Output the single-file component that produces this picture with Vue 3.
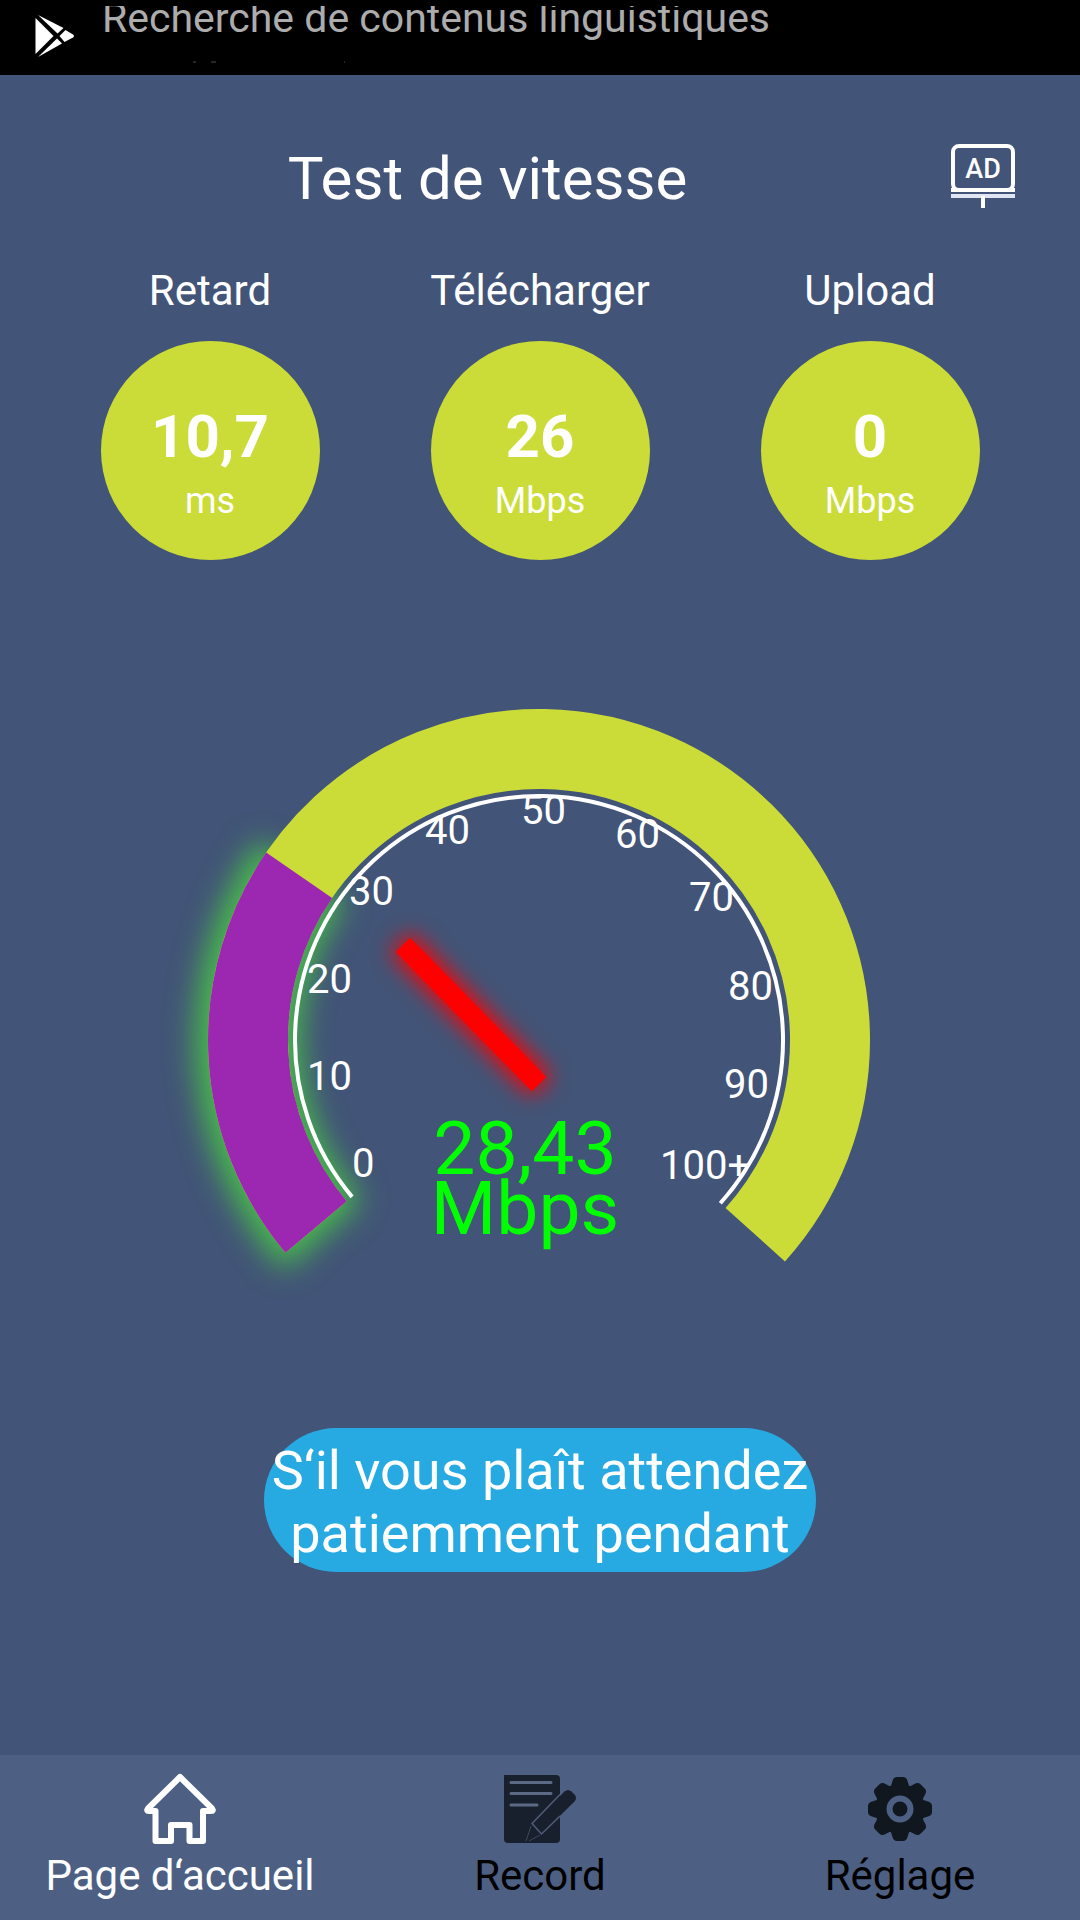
<script setup>
import { ref, computed } from 'vue'

const stats = [
  { label: 'Retard', value: '10,7', unit: 'ms' },
  { label: 'Télécharger', value: '26', unit: 'Mbps' },
  { label: 'Upload', value: '0', unit: 'Mbps' },
]

const tabs = [
  { id: 'home', label: 'Page d‘accueil' },
  { id: 'record', label: 'Record' },
  { id: 'settings', label: 'Réglage' },
]
const active = ref('home')

// Gauge geometry, measured in degrees clockwise from the positive x axis
const START = 140
const SWEEP = 262
const speed = 28.43

function point(radius, degrees) {
  const a = (degrees * Math.PI) / 180
  return `${(radius * Math.cos(a)).toFixed(2)} ${(radius * Math.sin(a)).toFixed(2)}`
}
function arc(radius, from, to) {
  const large = to - from > 180 ? 1 : 0
  return `M${point(radius, from)} A${radius} ${radius} 0 ${large} 1 ${point(radius, to)}`
}

const track = arc(291, START, START + SWEEP)
const rim = arc(244, START, START + SWEEP)
const progressEnd = computed(() => START + (SWEEP * speed) / 100)
const progress = computed(() => arc(291, START, progressEnd.value))
const halo = computed(() => arc(291, START - 2, progressEnd.value + 1))

const ticks = [
  { text: '0', x: -187, y: 137 },
  { text: '10', x: -232, y: 50 },
  { text: '20', x: -232, y: -47 },
  { text: '30', x: -190, y: -135 },
  { text: '40', x: -114, y: -196 },
  { text: '50', x: -18, y: -216 },
  { text: '60', x: 76, y: -192 },
  { text: '70', x: 150, y: -129 },
  { text: '80', x: 189, y: -40 },
  { text: '90', x: 185, y: 58 },
  { text: '100+', x: 121, y: 139 },
]

const teeth = [0, 45, 90, 135, 180, 225, 270, 315]
</script>

<template>
  <div class="screen">
    <div class="status">
      <svg class="play" viewBox="0 0 42 44" aria-hidden="true">
        <path d="M1.5 4V40L19.5 22z" />
        <path d="M4 1L29.500 14L23.500 19.500z" />
        <path d="M4 43L28 29.500L23 24.500z" />
        <path d="M31.500 16L39 20.500Q41 22 39 23.500L30.500 28L25.500 22z" />
      </svg>
      <div class="ticker">
        <span>Recherche de contenus linguistiques</span>
        <svg class="next-line" viewBox="0 0 260 2" aria-hidden="true">
          <path d="M91 1h3M109 1h5M242 1h1" />
        </svg>
      </div>
    </div>

    <header class="header">
      <h1>Test de vitesse</h1>
      <button class="ad" type="button" aria-label="AD">
        <svg viewBox="0 0 64 64" aria-hidden="true">
          <rect x="2" y="2" width="60" height="44" rx="6" fill="none" stroke="#fff" stroke-width="4" />
          <path d="M0 46H64" stroke="#fff" stroke-width="4" />
          <path d="M0 52H64" stroke="#dfe5f2" stroke-width="4" />
          <path d="M32 52V64" stroke="#fff" stroke-width="4" />
          <text x="32" y="34" text-anchor="middle">AD</text>
        </svg>
      </button>
    </header>

    <section class="stats">
      <div v-for="s in stats" :key="s.label" class="stat">
        <h2>{{ s.label }}</h2>
        <div class="disc">
          <strong>{{ s.value }}</strong>
          <span>{{ s.unit }}</span>
        </div>
      </div>
    </section>

    <svg class="gauge" viewBox="-539 -380 1080 640" role="img" aria-label="28,43 Mbps">
      <defs>
        <filter
          id="green-glow"
          filterUnits="userSpaceOnUse"
          color-interpolation-filters="sRGB"
          x="-440"
          y="-300"
          width="400"
          height="600"
        >
          <feGaussianBlur stdDeviation="15" />
        </filter>
        <filter
          id="red-glow"
          filterUnits="userSpaceOnUse"
          color-interpolation-filters="sRGB"
          x="-200"
          y="-160"
          width="260"
          height="260"
        >
          <feGaussianBlur stdDeviation="11" />
        </filter>
      </defs>
      <path class="halo" :d="halo" filter="url(#green-glow)" />
      <path class="band track" :d="track" />
      <path class="band progress" :d="progress" />
      <path class="rim" :d="rim" />
      <text v-for="t in ticks" :key="t.text" class="tick" :x="t.x" :y="t.y">{{ t.text }}</text>
      <path class="needle-halo" d="M-138 -97L2 46" filter="url(#red-glow)" />
      <path class="needle" d="M-136 -95L0 44" />
      <text class="reading" x="-14" y="134">28,43</text>
      <text class="reading" x="-14" y="194">Mbps</text>
    </svg>

    <button class="wait" type="button">S‘il vous plaît attendez<br />patiemment pendant</button>

    <nav class="tabs">
      <button
        v-for="t in tabs"
        :key="t.id"
        type="button"
        class="tab"
        :class="{ active: active === t.id }"
        @click="active = t.id"
      >
        <svg v-if="t.id === 'home'" viewBox="0 0 72 72" aria-hidden="true">
          <path
            d="M36 4L68 35.500Q70 38 67 38H59V68H45.500V52H27V68H11.500V38H5Q2 38 4 35.500z"
            fill="none"
            stroke="#fff"
            stroke-width="6"
            stroke-linejoin="round"
          />
        </svg>
        <svg v-else-if="t.id === 'record'" viewBox="0 0 72 72" aria-hidden="true">
          <path d="M0 2H52Q56 2 56 6V66Q56 70 52 70H4Q0 70 0 66z" fill="#18202d" />
          <path d="M7 9.500H47M7 20.500H47M7 32H33" stroke="#5d6a85" stroke-width="3" stroke-linecap="round" />
          <path
            d="M27 52L60.500 18.500Q64 15.500 67.500 18.500L71 22Q73 25 71 28L37.500 61L23 69z"
            fill="#18202d"
          />
          <path d="M56 21.500L28 50.500L37.500 61L56 43" fill="none" stroke="#4f5d78" stroke-width="1.500" />
          <path d="M27 53L22 68M25 68L36 62" fill="none" stroke="#3b475c" stroke-width="1" />
        </svg>
        <svg v-else viewBox="-36 -36 72 72" aria-hidden="true">
          <g fill="#10171f">
            <circle r="25" />
            <path
              v-for="a in teeth"
              :key="a"
              d="M-10 -20L-7.500 -28Q-6.500 -32 -3 -32H3Q6.500 -32 7.500 -28L10 -20z"
              :transform="`rotate(${a})`"
            />
          </g>
          <circle r="10.500" fill="none" stroke="#4d6084" stroke-width="6" />
        </svg>
        <span>{{ t.label }}</span>
      </button>
    </nav>
  </div>
</template>

<style>
body {
  margin: 0;
  background: #425477;
}
</style>

<style scoped>
.screen {
  display: flex;
  flex-direction: column;
  min-height: 100vh;
  background: #425477;
  color: #fff;
  font-family: Roboto, 'Noto Sans', sans-serif;
}

button {
  margin: 0;
  padding: 0;
  border: 0;
  background: none;
  color: inherit;
  font-family: inherit;
  cursor: pointer;
}

.status {
  display: flex;
  box-sizing: border-box;
  height: 75px;
  padding: 6px 0 12px 34px;
  background: #000;
}

.play {
  width: 42px;
  height: 44px;
  margin-top: 8px;
  fill: #fff;
}

.ticker {
  display: flex;
  flex-direction: column;
  justify-content: space-between;
  flex: 1;
  margin-left: 26px;
  overflow: hidden;
  color: #acacac;
  font-size: 41px;
  line-height: 50px;
  white-space: nowrap;
}

.ticker span {
  margin-top: -13px;
}

.next-line {
  width: 260px;
  height: 2px;
  stroke: #4c4c4c;
  stroke-width: 1;
}

.header {
  display: flex;
  align-items: flex-start;
  padding: 68px 65px 0 24px;
}

.header h1 {
  flex: 1;
  margin: 0;
  font-size: 60px;
  font-weight: 400;
  line-height: 72px;
  text-align: center;
}

.ad {
  margin-top: 1px;
}

.ad svg {
  display: block;
  width: 64px;
  height: 64px;
}

.ad text {
  fill: #fff;
  font-size: 27px;
  font-weight: 500;
}

.stats {
  display: flex;
  padding: 51px 45px 0;
}

.stat {
  display: flex;
  flex: 1;
  flex-direction: column;
  align-items: center;
  gap: 25px;
}

.stat h2 {
  margin: 0;
  font-size: 42px;
  font-weight: 400;
  line-height: 50px;
}

.disc {
  display: flex;
  box-sizing: border-box;
  flex-direction: column;
  align-items: center;
  gap: 12px;
  width: 219px;
  height: 219px;
  padding-top: 66px;
  border-radius: 50%;
  background: #cbdc38;
}

.disc strong {
  font-size: 60px;
  font-weight: 700;
  line-height: 60px;
}

.disc span {
  font-size: 36px;
  line-height: 44px;
}

.gauge {
  display: block;
  width: 100%;
  margin-top: 100px;
}

.band {
  fill: none;
  stroke-width: 80;
}

.track {
  stroke: #cbdc38;
}

.progress {
  stroke: #9c27b0;
}

.halo {
  fill: none;
  stroke: #47be4a;
  stroke-width: 104;
}

.rim {
  fill: none;
  stroke: #fff;
  stroke-width: 4;
}

.tick {
  fill: #fff;
  font-size: 40px;
}

.needle,
.needle-halo {
  fill: none;
  stroke: #f00;
  stroke-width: 20;
}

.needle-halo {
  stroke-width: 28;
}

.reading {
  fill: #0f0;
  font-size: 75px;
  text-anchor: middle;
}

.wait {
  align-self: center;
  box-sizing: border-box;
  width: 552px;
  height: 144px;
  margin: 128px 0 40px;
  padding-top: 3px;
  border-radius: 72px;
  background: #27aae1;
  font-size: 54px;
  line-height: 63px;
  white-space: nowrap;
}

.tabs {
  display: flex;
  margin-top: auto;
  background: #4d6084;
}

.tab {
  display: flex;
  flex: 1;
  flex-direction: column;
  align-items: center;
  padding: 18px 0 19px;
  color: #000;
  font-size: 42px;
  line-height: 50px;
}

.tab.active {
  color: #fff;
}

.tab svg {
  width: 72px;
  height: 72px;
  margin-bottom: 6px;
}
</style>
